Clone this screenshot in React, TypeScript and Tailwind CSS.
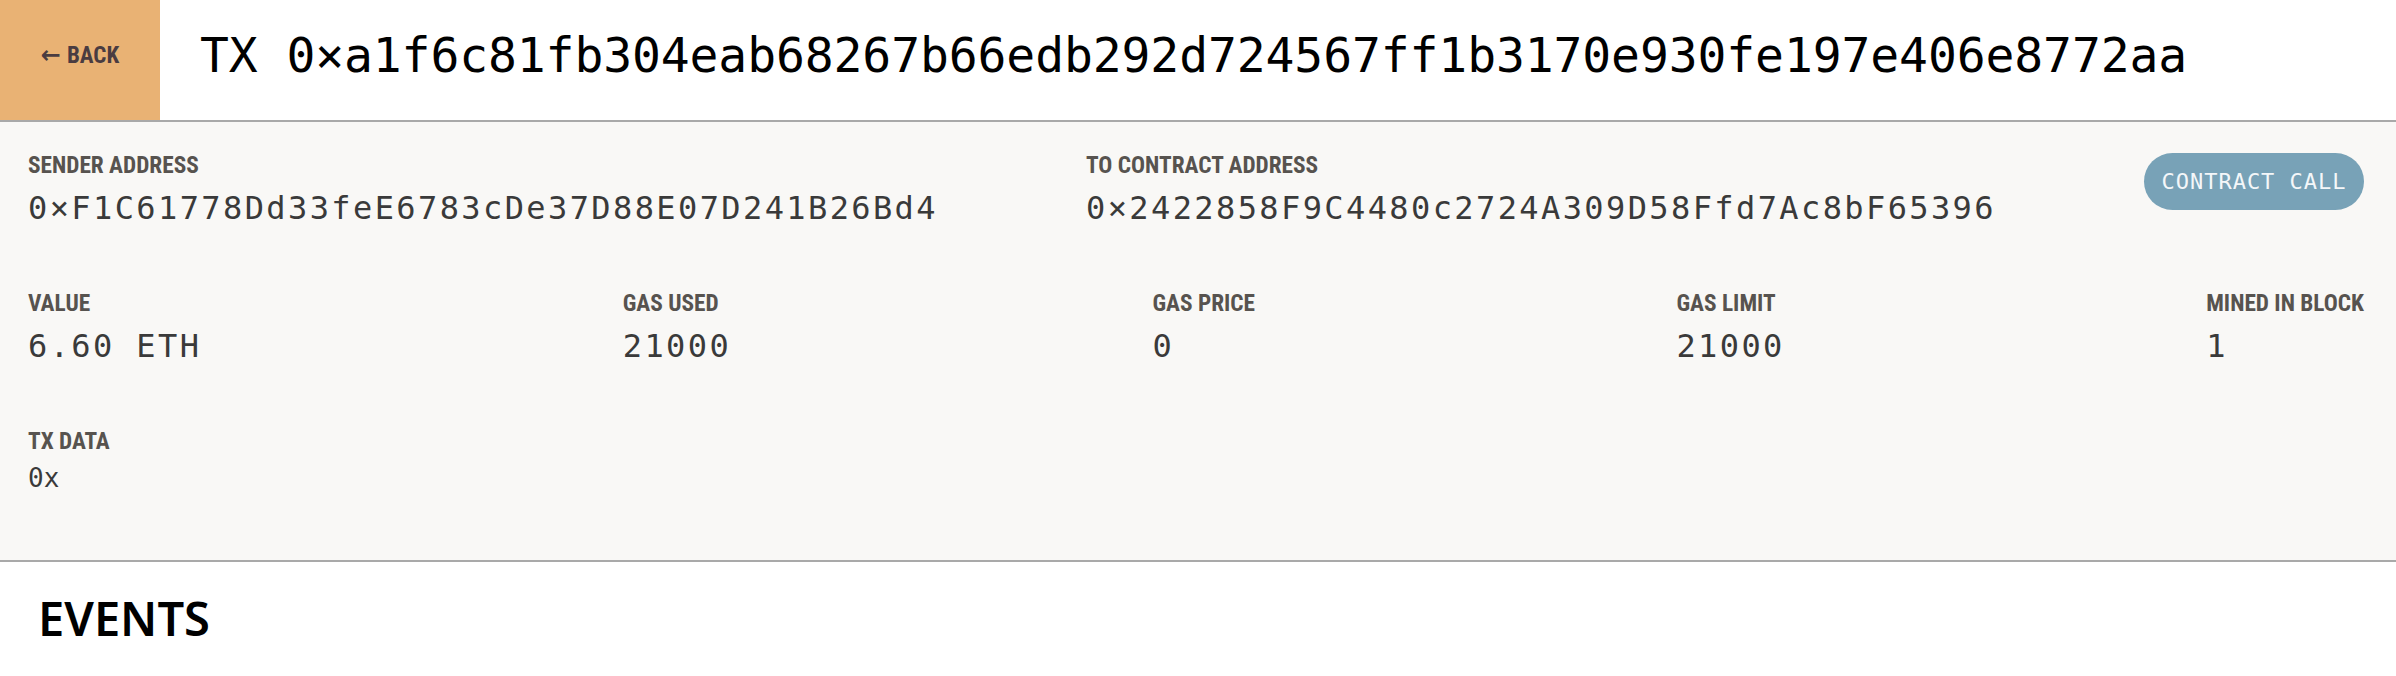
import React from 'react'

const label = "font-['Liberation_Sans_Narrow','Roboto_Condensed',Roboto,sans-serif] font-bold text-[23.3px] leading-[22px] text-[#57534f] uppercase"
const value = "font-['DejaVu_Sans_Mono',monospace] text-[32px] leading-[32px] tracking-[2.4px] text-[#3a3a3a] mt-[16px] whitespace-nowrap"

function Field({ name, val }: { name: string; val: string }) {
  return (
    <div className="flex flex-col">
      <div className={label}>{name}</div>
      <div className={value}>{val}</div>
    </div>
  )
}

export default function App() {
  return (
    <div className="w-[2396px] bg-white">
      {/* Header */}
      <div className="flex h-[122px] border-b-2 border-[#a9a9a9]">
        <button className="w-[160px] h-full bg-[#e9b274] flex items-start justify-center pt-[44px]">
          <span className="font-['Liberation_Sans_Narrow','Roboto_Condensed',Roboto,sans-serif] font-bold text-[23px] leading-[23px] text-[#4a3c41] whitespace-nowrap">
            <span className="font-['DejaVu_Sans',sans-serif] font-bold text-[24px] mr-[6px]">←</span>BACK
          </span>
        </button>
        <h1 className="pl-[40px] pt-[31px] font-['DejaVu_Sans_Mono',monospace] text-[48px] leading-[48px] tracking-[-0.1px] text-black whitespace-nowrap">
          TX 0×a1f6c81fb304eab68267b66edb292d724567ff1b3170e930fe197e406e8772aa
        </h1>
      </div>

      {/* Transaction details */}
      <div className="bg-[#f9f8f6] border-b-2 border-[#a9a9a9] pt-[32px] pb-[69px] pl-[28px] pr-[32px] flex flex-col gap-[68px]">
        <div className="flex justify-between items-start">
          <Field name="Sender Address" val="0×F1C61778Dd33feE6783cDe37D88E07D241B26Bd4" />
          <Field name="To Contract Address" val="0×2422858F9C4480c2724A309D58Ffd7Ac8bF65396" />
          <div className="w-[220px] h-[57px] -mt-[1px] rounded-full bg-[#78a2b7] flex items-center justify-center font-['DejaVu_Sans_Mono',monospace] text-[22px] tracking-[1px] text-[#f4f7f9]">
            CONTRACT CALL
          </div>
        </div>

        <div className="flex justify-between items-start">
          <Field name="Value" val="6.60 ETH" />
          <Field name="Gas Used" val="21000" />
          <Field name="Gas Price" val="0" />
          <Field name="Gas Limit" val="21000" />
          <Field name="Mined in Block" val="1" />
        </div>

        <div className="flex flex-col">
          <div className={label}>TX Data</div>
          <div className="font-['DejaVu_Sans_Mono',monospace] text-[26px] leading-[26px] text-[#3a3a3a] mt-[13px]">0x</div>
        </div>
      </div>

      {/* Events */}
      <div className="pl-[38px] pt-[33px] pb-[30px]">
        <h2 className="font-['Noto_Sans',sans-serif] font-semibold text-[47px] leading-[47px] text-black">EVENTS</h2>
      </div>
    </div>
  )
}
